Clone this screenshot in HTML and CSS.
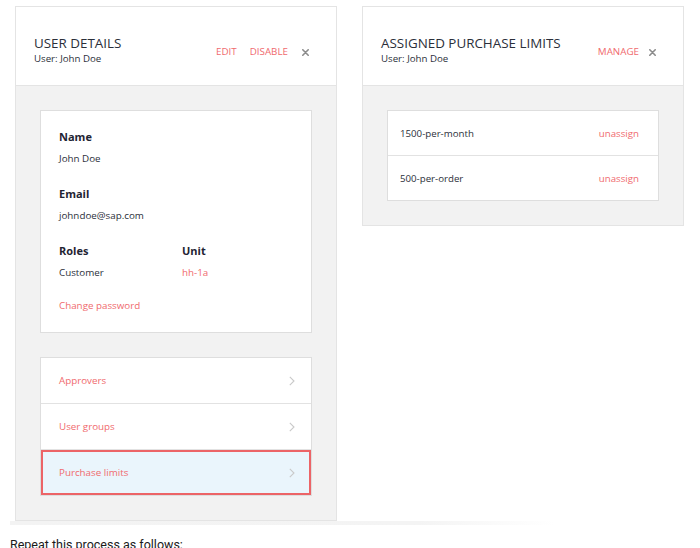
FILE: index.html
```html
<!DOCTYPE html>
<html lang="en">
<head>
<meta charset="utf-8">
<title>User details</title>
<link rel="stylesheet" href="styles.css">
</head>
<body>
<div class="shot">
  <div class="stage">
    <section class="panel">
      <header class="panel-head">
        <div class="titles">
          <h1 class="title">USER DETAILS</h1>
          <div class="subtitle">User: John Doe</div>
        </div>
        <div class="actions">
          <a class="action">EDIT</a>
          <a class="action">DISABLE</a>
          <svg class="close" width="7" height="7" viewBox="0 0 7 7"><path d="M0.8 0.8 L6.2 6.2 M6.2 0.8 L0.8 6.2" stroke="#8c8c8c" stroke-width="1.6" stroke-linecap="round"/></svg>
        </div>
      </header>
      <div class="panel-body">
        <div class="card details">
          <div class="field wide">
            <div class="label">Name</div>
            <div class="value">John Doe</div>
          </div>
          <div class="field wide">
            <div class="label">Email</div>
            <div class="value">johndoe@sap.com</div>
          </div>
          <div class="field">
            <div class="label">Roles</div>
            <div class="value">Customer</div>
          </div>
          <div class="field">
            <div class="label">Unit</div>
            <div class="value link">hh-1a</div>
          </div>
          <div class="field wide pw">
            <div class="value link">Change password</div>
          </div>
        </div>
        <div class="card nav">
          <div class="nav-row"><span class="link">Approvers</span><svg class="chev" width="6" height="10" viewBox="0 0 6 10"><path d="M0.8 0.8 L5 5 L0.8 9.2" fill="none" stroke="#c9c9c9" stroke-width="1.1"/></svg></div>
          <div class="nav-row"><span class="link">User groups</span><svg class="chev" width="6" height="10" viewBox="0 0 6 10"><path d="M0.8 0.8 L5 5 L0.8 9.2" fill="none" stroke="#c9c9c9" stroke-width="1.1"/></svg></div>
          <div class="nav-row active"><span class="link">Purchase limits</span><svg class="chev" width="6" height="10" viewBox="0 0 6 10"><path d="M0.8 0.8 L5 5 L0.8 9.2" fill="none" stroke="#c9c9c9" stroke-width="1.1"/></svg></div>
        </div>
      </div>
    </section>
    <section class="panel">
      <header class="panel-head">
        <div class="titles">
          <h1 class="title">ASSIGNED PURCHASE LIMITS</h1>
          <div class="subtitle">User: John Doe</div>
        </div>
        <div class="actions tight">
          <a class="action">MANAGE</a>
          <svg class="close" width="7" height="7" viewBox="0 0 7 7"><path d="M0.8 0.8 L6.2 6.2 M6.2 0.8 L0.8 6.2" stroke="#8c8c8c" stroke-width="1.6" stroke-linecap="round"/></svg>
        </div>
      </header>
      <div class="panel-body">
        <div class="card limits">
          <div class="limit-row"><span>1500-per-month</span><span class="link">unassign</span></div>
          <div class="limit-row"><span>500-per-order</span><span class="link">unassign</span></div>
        </div>
      </div>
    </section>
  </div>
  <div class="fade"></div>
</div>
<p class="para">Repeat this process as follows:</p>
</body>
</html>
```

FILE: styles.css
```css
* { box-sizing: border-box; }
html, body { margin: 0; padding: 0; background: #ffffff; }
body { font-family: "Open Sans", "Liberation Sans", sans-serif; color: #32363a; }

.stage {
  display: flex;
  align-items: flex-start;
  gap: 25px;
  padding: 6px 0 0 15px;
}

.panel {
  width: 322px;
  border: 1px solid #e4e4e4;
  background: #f2f2f2;
}

.panel-head {
  display: flex;
  align-items: flex-start;
  justify-content: space-between;
  background: #ffffff;
  border-bottom: 1px solid #e4e4e4;
  padding: 27px 27px 19px 18px;
  height: 79px;
}

.title {
  margin: 0;
  font-size: 13.4px;
  line-height: 18px;
  font-weight: 400;
  color: #2b2f3a;
}

.subtitle {
  font-size: 9.7px;
  line-height: 14px;
  color: #2b2f3a;
}

.actions {
  display: flex;
  align-items: center;
  margin-top: 11px;
  height: 14px;
}

.action {
  font-size: 9.8px;
  line-height: 14px;
  color: #f06a6e;
  margin-right: 13px;
}

.actions .action:last-of-type { margin-right: 14px; }
.actions.tight .action:last-of-type { margin-right: 10px; }

.close { display: block; }

.panel-body {
  padding: 24px;
}

.card {
  background: #ffffff;
  border: 1px solid #dedede;
}

.details {
  display: grid;
  grid-template-columns: 123px 1fr;
  row-gap: 19px;
  padding: 18px 19px 18px 18px;
}

.field { display: flex; flex-direction: column; gap: 6px; }
.field.wide { grid-column: 1 / -1; }
.field.pw { margin-top: -2px; }

.label {
  font-size: 11px;
  line-height: 16px;
  font-weight: 700;
  color: #1f2433;
}

.value {
  font-size: 9.8px;
  line-height: 16px;
  color: #2b2f3a;
}

.link { color: #f06a6e; }

.nav { margin-top: 24px; }

.nav-row {
  display: flex;
  align-items: center;
  justify-content: space-between;
  height: 46px;
  padding: 0 16px 0 18px;
  border-bottom: 1px solid #e2e2e2;
  font-size: 9.8px;
}

.nav-row.active {
  border-bottom: none;
  height: 45px;
  background: #eaf5fc;
  box-shadow: inset 0 0 0 2px #ec6467;
}

.chev { display: block; }

.limit-row {
  display: flex;
  align-items: center;
  justify-content: space-between;
  height: 44px;
  padding: 0 19px 0 12px;
  font-size: 9.7px;
  color: #2b2f3a;
}

.limit-row + .limit-row {
  border-top: 1px solid #e2e2e2;
  height: 45px;
}

.fade {
  margin-left: 10px;
  width: 545px;
  height: 4px;
  background: linear-gradient(to right, #f3f3f3 0%, #f4f4f4 75%, rgba(255,255,255,0) 100%);
}

.para {
  margin: 10px 0 0 10px;
  font-family: "Roboto", "Liberation Sans", sans-serif;
  font-size: 12.5px;
  line-height: 20px;
  color: #1a1a1a;
}
```
